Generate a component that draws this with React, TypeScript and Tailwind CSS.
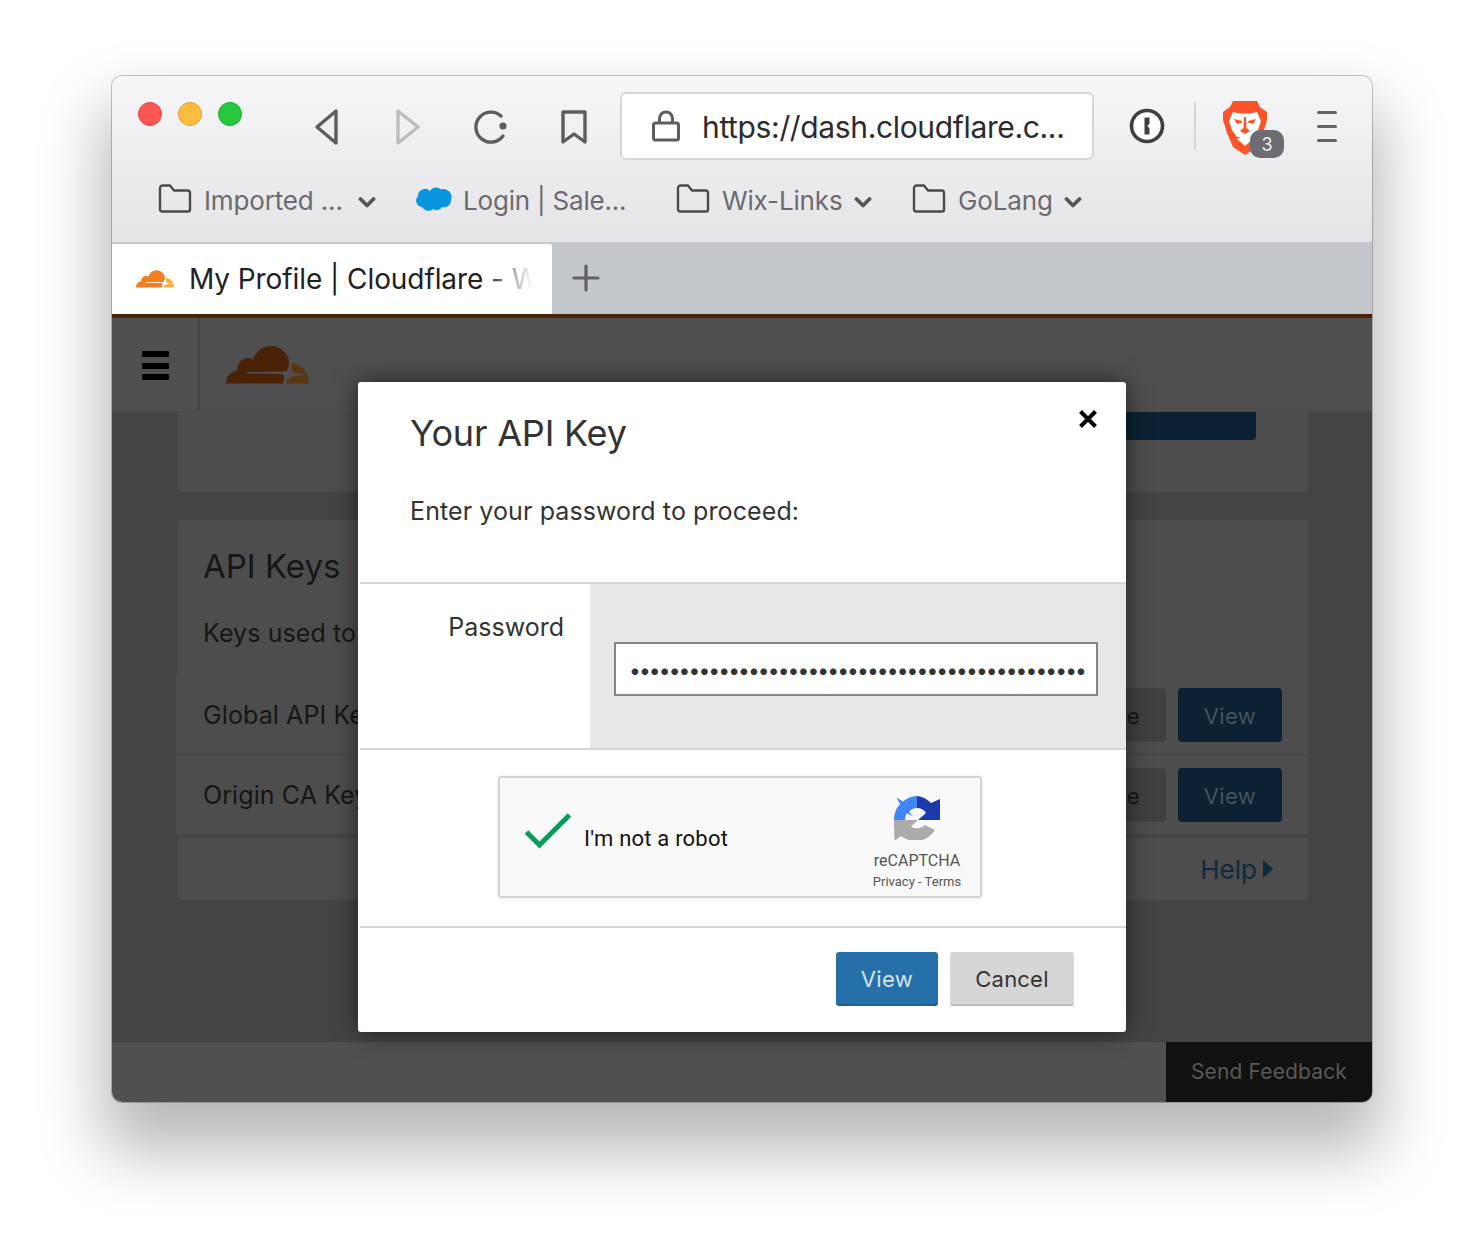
const Folder = () => (
  <svg className="-mt-[2px]" width="34" height="30" viewBox="0 0 34 30" fill="none" stroke="#4a4b50" strokeWidth="2.4" strokeLinejoin="round">
    <path d="M2 4 A2.500 2.500 0 0 1 4.500 1.500 H12 L16 6.500 H29.500 A2.500 2.500 0 0 1 32 9 V25.500 A2 2 0 0 1 30 27.500 H4 A2 2 0 0 1 2 25.500 Z" />
  </svg>
);

const Chevron = () => (
  <svg className="mt-[3px]" width="18" height="12" viewBox="0 0 18 12" fill="none" stroke="#55565b" strokeWidth="3.8" strokeLinecap="round" strokeLinejoin="round">
    <path d="M2.500 3 L9 9.500 L15.500 3" />
  </svg>
);

const Bookmark = ({ label, w, gap }: { label: string; w: string; gap: string }) => (
  <div className={`flex items-center ${w}`}>
    <Folder />
    <span className={`ml-[12px] text-[26px] text-[#6a6b70] tracking-[-0.15px] ${gap}`}>{label}</span>
    <Chevron />
  </div>
);

const CloudLogo = ({ a, b, w, h }: { a: string; b: string; w: number; h: number }) => (
  <svg width={w} height={h} viewBox="0 0 83 38">
    <path fill={a} d="M0 37.500 C0 30 5 25 11 24.500 C11 17 16 12 22 12 C24 12 26 13 27 14 C30 5 37 0 45 0 C55 0 63 8 63 17 C63 20 62 23 60 25.500 L22 26 Q19 26 22 27.500 L55 28 Q59 29 58 33 L57 37.500 Z" />
    <path fill={b} d="M65 17 C75 17 83 26 83 37.500 L60 37.500 C61 33 64 31 69 30 L82 28.500 L67 27 C65.500 24 66 20 65 17 Z" />
  </svg>
);

const Recaptcha = () => (
  <svg width="48" height="46" viewBox="8 6 48 46">
    <path fill="#ababab" d="M9 32 H33 L26 38.500 A11 11 0 0 0 40 37 L50 42 A23 23 0 0 1 16 48 L9.500 53 Z" />
    <path fill="#4285f4" d="M9 32 A23 23 0 0 1 15 16 L11.500 9.500 L18 13.500 A23 23 0 0 1 32 8 V20 A11 11 0 0 0 24 24 L28 28.500 L22 25 A11 11 0 0 0 20 32 Z" />
    <path fill="#1c3aa9" d="M32 8 A23 23 0 0 1 46 15 L55 11 V32 H33 L41 25 A11 11 0 0 0 32 20 Z" />
  </svg>
);

const RowBtns = () => (
  <div className="flex items-center gap-[12px]">
    <div className="w-[110px] h-[54px] rounded-[4px] bg-[#404040] text-[#141414] text-[22px] tracking-[0.4px] flex items-center justify-end pr-[26px] pt-[2px]">Change</div>
    <div className="w-[104px] h-[54px] rounded-[4px] bg-[#0c2233] text-[#46525c] text-[22px] tracking-[0.4px] flex items-center justify-center pt-[2px]">View</div>
  </div>
);

export default function App() {
  return (
    <div className="w-[1484px] h-[1250px] bg-white pt-[76px] pl-[112px] overflow-hidden" style={{ fontFamily: 'Inter, "Liberation Sans", sans-serif' }}>
      <div className="relative w-[1260px] h-[1026px] rounded-[10px] flex flex-col shadow-[0_40px_64px_10px_rgba(0,0,0,0.28),0_0_0_1px_rgba(0,0,0,0.22)]">
        {/* Browser chrome */}
        <div className="h-[166px] shrink-0 rounded-t-[10px] bg-gradient-to-b from-[#f6f6f8] to-[#e5e5e7] flex flex-col">
          <div className="flex items-start h-[84px] pt-[16px]">
            <div className="flex gap-[16px] pl-[26px] pt-[10px] w-[186px]">
              <div className="w-[24px] h-[24px] rounded-full bg-[#fc5753] border border-[#df4744]" />
              <div className="w-[24px] h-[24px] rounded-full bg-[#fdbc40] border border-[#de9f34]" />
              <div className="w-[24px] h-[24px] rounded-full bg-[#27c83f] border border-[#1aab29]" />
            </div>
            <div className="flex items-center h-[68px] w-[322px]">
              <svg className="w-[40px] h-[40px] ml-[12px] mt-[2px]" viewBox="0 0 40 40" fill="none" stroke="#5c5c61" strokeWidth="3.4" strokeLinejoin="round" strokeLinecap="round"><path d="M26 4 V36 L7 20 Z" /></svg>
              <svg className="w-[40px] h-[40px] ml-[38px] mt-[2px]" viewBox="0 0 40 40" fill="none" stroke="#bdbdc2" strokeWidth="3.4" strokeLinejoin="round" strokeLinecap="round"><path d="M10 4 V36 L30 20 Z" /></svg>
              <svg className="w-[40px] h-[40px] ml-[43px] mt-[2px]" viewBox="0 0 40 40" fill="none" stroke="#5c5c61" strokeWidth="3.4" strokeLinecap="round"><path d="M30 9 A15 15 0 1 0 32 29" /><circle cx="32" cy="19" r="3.6" fill="#5c5c61" stroke="none" /></svg>
              <svg className="w-[40px] h-[40px] ml-[43px] mt-[1px]" viewBox="0 0 40 40" fill="none" stroke="#5c5c61" strokeWidth="3.4" strokeLinejoin="round"><path d="M9 5 H31 V35 L20 27 L9 35 Z" /></svg>
            </div>
            <div className="w-[474px] h-[68px] bg-white rounded-[6px] border-2 border-[#d4d7da] flex items-center">
              <svg className="w-[28px] h-[32px] ml-[30px] shrink-0" viewBox="0 0 28 32" fill="none" stroke="#5c5c61" strokeWidth="3"><rect x="1.500" y="13" width="25" height="17" rx="2" /><path d="M7.500 13 V8.500 A6.500 6.500 0 0 1 20.500 8.500 V13" /></svg>
              <span className="ml-[22px] mt-[2px] text-[30px] text-[#2b2b2e] tracking-[-0.35px] whitespace-nowrap">https://dash.cloudflare.c...</span>
            </div>
            <div className="h-[68px] flex items-center ml-[34px]">
              <svg width="38" height="38" viewBox="0 0 38 38"><circle cx="19" cy="19" r="15.500" fill="#fff" stroke="#3f3f42" strokeWidth="3.6" /><path d="M16.500 10.500 H21.500 V16.500 L19.500 19 L21.500 21.500 V27.500 H16.500 Z" fill="#3f3f42" /></svg>
            </div>
            <div className="w-[2px] h-[48px] bg-[#d5d6d9] ml-[28px] mt-[10px]" />
            <div className="relative w-[64px] h-[68px] ml-[26px]">
              <svg className="absolute left-0 top-[9px]" width="48" height="56" viewBox="0 0 48 56">
                <path fill="#fb542b" d="M11 0 H35 L38 6 L45 11 L45 19 L41 32 L35 46 L23 54 L11 46 L5 32 L1 19 L1 11 L8 6 Z" />
                <path fill="#fff" d="M11 11 L18 12.500 H28 L35 11 L39 20 L36 29 L31 36 H15 L10 29 L7 20 Z" />
                <path fill="#fb542b" d="M12 18 L20 20 L20 21.500 L15 23 Z M34 18 L26 20 L26 21.500 L31 23 Z M22 16 H24 L24.500 27 L28 30 L23 33 L18 30 L21.500 27 Z" />
                <path fill="#fff" d="M15 38 L23 34 L31 38 L23 45 Z" />
              </svg>
              <div className="absolute left-[28px] top-[38px] w-[34px] h-[28px] rounded-[10px] bg-[#6c6c72] text-[#f0f0f2] text-[18px] flex items-center justify-center">3</div>
            </div>
            <div className="h-[68px] flex flex-col justify-center gap-[11px] ml-[31px] w-[20px]">
              <div className="h-[3px] bg-[#636368] rounded-full" />
              <div className="h-[3px] bg-[#636368] rounded-full" />
              <div className="h-[3px] bg-[#636368] rounded-full" />
            </div>
          </div>
          <div className="flex items-center h-[52px] pl-[46px] mt-[14px]">
            <Bookmark label="Imported ..." w="w-[257px]" gap="mr-[15px]" />
            <svg className="shrink-0" width="38" height="28" viewBox="0 0 38 28"><path fill="#0a95e0" d="M15 5 A7 7 0 0 1 26 3.500 A8 8 0 0 1 36 14 A7 7 0 0 1 27 21 A6 6 0 0 1 18 23 A7 7 0 0 1 7 21 A6.500 6.500 0 0 1 3 10 A7 7 0 0 1 15 5 Z" /></svg>
            <span className="ml-[10px] w-[213px] text-[26px] text-[#6a6b70] tracking-[-0.2px] whitespace-nowrap">Login | Sale...</span>
            <Bookmark label="Wix-Links" w="w-[236px]" gap="mr-[11px]" />
            <Bookmark label="GoLang" w="w-[180px]" gap="mr-[11px]" />
          </div>
        </div>
        {/* Tab strip */}
        <div className="h-[72px] shrink-0 bg-[#c4c8cc] flex items-stretch">
          <div className="relative w-[440px] mt-[2px] bg-white rounded-tr-[3px] flex items-center pl-[24px] overflow-hidden">
            <CloudLogo a="#f38020" b="#faae40" w={38} h={18} />
            <span className="ml-[15px] text-[28px] text-[#212124] tracking-[-0.08px] whitespace-nowrap">My Profile | Cloudflare - W</span>
            <div className="absolute right-0 top-0 bottom-0 w-[66px] bg-gradient-to-r from-white/0 to-white to-70%" />
          </div>
          <div className="ml-[20px] flex items-center">
            <svg width="28" height="28" viewBox="0 0 28 28" stroke="#5f6166" strokeWidth="3.2" strokeLinecap="round"><path d="M14 2 V26 M2 14 H26" /></svg>
          </div>
        </div>
        <div className="h-[4px] shrink-0 bg-[#4a2306]" />
        {/* Dimmed page */}
        <div className="h-[94px] shrink-0 bg-[#4f4f4f] flex border-b border-[#484848]">
          <div className="w-[88px] border-r-2 border-[#444] flex flex-col items-center justify-center gap-[5.500px] pt-[2px] pl-[1px]">
            <div className="w-[27px] h-[6px] bg-black rounded-[1px]" />
            <div className="w-[27px] h-[6px] bg-black rounded-[1px]" />
            <div className="w-[27px] h-[6px] bg-black rounded-[1px]" />
          </div>
          <div className="ml-[26px] pt-[28px]"><CloudLogo a="#4a2306" b="#5a3610" w={83} h={38} /></div>
        </div>
        <div className="flex-1 bg-[#444444] pl-[66px] pr-[64px]">
          <div className="h-[80px] bg-[#4d4d4d] rounded-b-[3px] relative">
            <div className="absolute right-[52px] top-0 w-[200px] h-[28px] bg-[#0c2233] rounded-b-[4px]" />
          </div>
          <div className="mt-[28px] h-[380px] bg-[#4d4d4d] rounded-[3px] flex flex-col">
            <div className="h-[156px] pl-[25px] pt-[22px]">
              <div className="text-[33px] text-[#161616]">API Keys</div>
              <div className="text-[25px] text-[#161616] mt-[23px] tracking-[0.1px]">Keys used to</div>
            </div>
            <div className="h-[80px] -ml-[2px] pl-[27px] pr-[26px] flex items-center justify-between border-b-2 border-[#474747] bg-[#4d4d4d]">
              <span className="text-[25px] text-[#161616] tracking-[0.1px] pt-[2px]">Global API Key</span>
              <RowBtns />
            </div>
            <div className="h-[80px] -ml-[2px] pl-[27px] pr-[26px] flex items-center justify-between border-b-2 border-[#454545] bg-[#4d4d4d]">
              <span className="text-[25px] text-[#161616] tracking-[0.1px] pt-[2px]">Origin CA Key</span>
              <RowBtns />
            </div>
            <div className="flex-1 flex items-center justify-end pr-[35px] text-[26px] text-[#0f2a40] border-t-2 border-[#454545]">
              Help
              <svg className="ml-[6px]" width="10" height="18" viewBox="0 0 10 18"><path d="M0 0 L10 9 L0 18 Z" fill="#0f2a40" /></svg>
            </div>
          </div>
        </div>
        <div className="h-[60px] shrink-0 rounded-b-[10px] bg-[#505050] flex justify-end overflow-hidden">
          <div className="w-[206px] bg-[#111111] text-[#585858] text-[21px] tracking-[0.15px] flex items-center justify-center">Send Feedback</div>
        </div>
        {/* Modal */}
        <div className="absolute left-[246px] top-[306px] w-[768px] h-[650px] bg-white rounded-[3px] shadow-[0_0_24px_rgba(0,0,0,0.55)] flex flex-col">
          <div className="relative h-[200px] shrink-0">
            <div className="absolute left-[52px] top-[26px] text-[36px] text-[#333] leading-[50px] tracking-[-0.2px]">Your API Key</div>
            <svg className="absolute left-[721px] top-[28px]" width="18" height="18" viewBox="0 0 18 18" stroke="#000" strokeWidth="4"><path d="M1.500 1.500 L16.500 16.500 M16.500 1.500 L1.500 16.500" /></svg>
            <div className="absolute left-[52px] top-[113px] text-[25px] text-[#333] leading-[32px] tracking-[0.1px]">Enter your password to proceed:</div>
          </div>
          <div className="h-[168px] shrink-0 flex border-y-2 border-[#d5d6d6] ml-[2px]">
            <div className="w-[230px] pt-[27px] pr-[26px] text-right text-[25px] text-[#333] leading-[32px]">Password</div>
            <div className="flex-1 bg-[#e6e8e8] pt-[58px] pl-[24px] pr-[28px]">
              <div className="w-[484px] h-[54px] border-2 border-[#858585] bg-white flex items-center pl-[13px] pt-[3px] overflow-hidden">
                <span className="text-[21px] text-[#333] tracking-[-1.9px] whitespace-nowrap leading-none">••••••••••••••••••••••••••••••••••••••••••••••</span>
              </div>
            </div>
          </div>
          <div className="h-[178px] shrink-0 pt-[26px] pl-[138px] border-b-2 border-[#d5d6d6] ml-[2px]">
            <div className="w-[484px] h-[122px] bg-[#f9f9f9] border-2 border-[#d3d3d3] rounded-[3px] shadow-[0_0_4px_rgba(0,0,0,0.08)] flex">
              <svg className="ml-[25px] mt-[34px]" width="46" height="38" viewBox="0 0 46 38" fill="none" stroke="#0b9d58" strokeWidth="5"><path d="M1.500 20 L14.500 33 L44.500 3" /></svg>
              <span className="ml-[13px] mt-[46px] text-[22px] text-[#111] font-['Roboto',sans-serif] tracking-[0.2px] leading-[30px] whitespace-nowrap">I'm not a robot</span>
              <div className="ml-[auto] w-[126px] flex flex-col items-center pt-[16px]">
                <Recaptcha />
                <div className="text-[16px] leading-[20px] text-[#555] mt-[11px] whitespace-nowrap font-['Roboto',sans-serif]">reCAPTCHA</div>
                <div className="text-[13px] leading-[16px] text-[#555] mt-[3px] whitespace-nowrap font-['Roboto',sans-serif]">Privacy - Terms</div>
              </div>
            </div>
          </div>
          <div className="flex justify-end pr-[52px] pt-[24px] gap-[12px]">
            <div className="w-[102px] h-[54px] rounded-[3px] bg-[#2670a9] border-b-2 border-[#1f5f90] text-white/80 text-[22px] tracking-[0.4px] flex items-center justify-center pt-[2px]">View</div>
            <div className="w-[124px] h-[54px] rounded-[3px] bg-[#d5d6d6] border-b-2 border-[#bbbcbc] text-[#333] text-[22px] tracking-[0.2px] flex items-center justify-center pt-[2px]">Cancel</div>
          </div>
        </div>
      </div>
    </div>
  );
}
